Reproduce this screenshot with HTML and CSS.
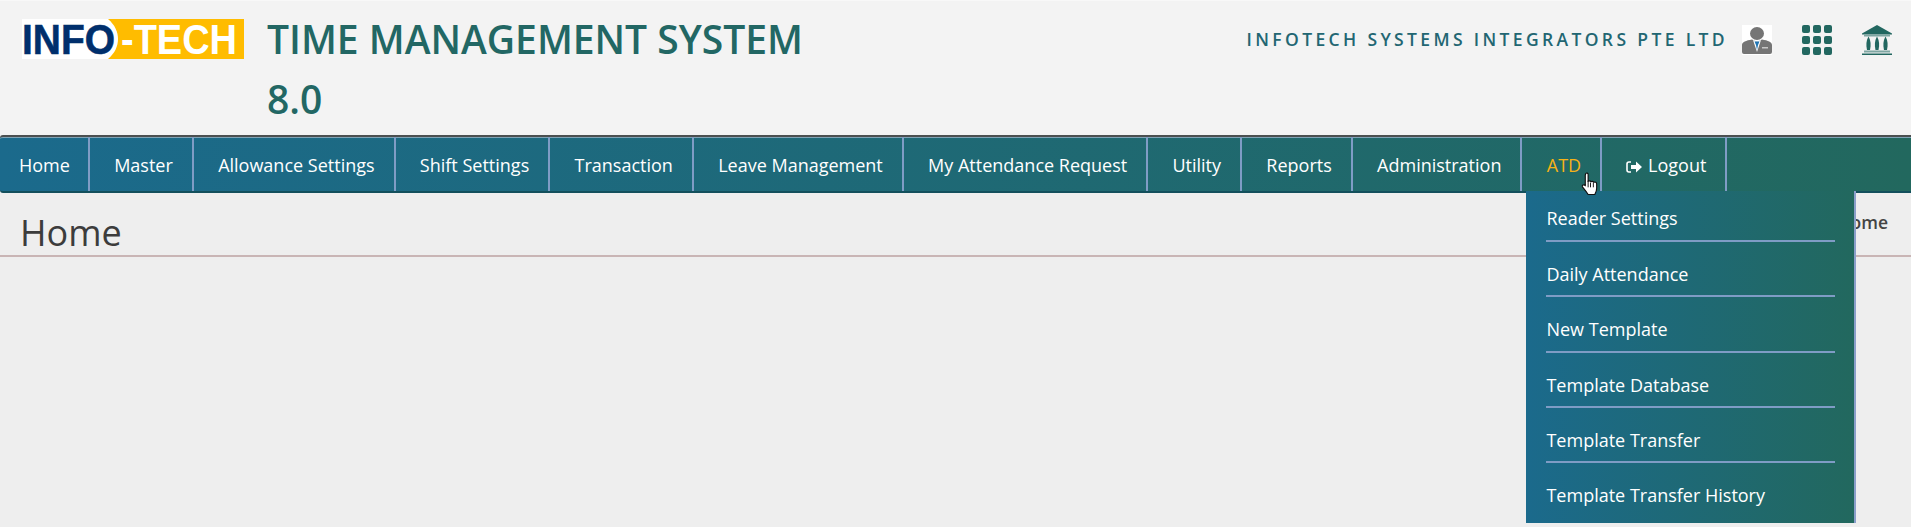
FILE: index.html
```html
<!DOCTYPE html>
<html lang="en">
<head>
  <meta charset="UTF-8">
  <title>Time Management System</title>
  <link rel="stylesheet" href="styles.css">
</head>
<body>

  <!-- Top Header -->
  <header class="top-header">
    <svg class="logo" width="222" height="40" viewBox="0 0 222 40">
      <rect width="222" height="40" fill="#ffbc00"/>
      <path d="M0 0H86C93 6 96 13 96 20C96 27 93 34 86 40H0Z" fill="#fff"/>
      <text class="logo-text" x="0" y="35" fill="#002f6c" stroke="#002f6c" stroke-width=".6" textLength="93" lengthAdjust="spacingAndGlyphs">INFO</text>
      <text class="logo-text" x="99" y="35" fill="#fff" textLength="116" lengthAdjust="spacingAndGlyphs">-TECH</text>
    </svg>
    <h1 class="app-title">TIME MANAGEMENT SYSTEM 8.0</h1>
    <div class="company">
      <span class="company-name">INFOTECH SYSTEMS INTEGRATORS PTE LTD</span>
      <svg class="head-icon" viewBox="0 0 30 30">
        <rect width="30" height="30" fill="#fff"/>
        <ellipse cx="15" cy="8.500" rx="7" ry="6.500" fill="#757575"/>
        <path d="M0 27V20C0 17 4 15.500 10 14.500L15 17L20 14.500C26 15.500 30 17 30 20V27Q30 29 28 29H2Q0 29 0 27Z" fill="#757575"/>
        <path d="M11 15L15 27L19 15L15 17Z" fill="#fff"/>
        <path d="M12.500 16.500L17.500 16.500L16 20L15 25L14 20Z" fill="#2176b5"/>
        <rect x="20" y="22" width="6" height="1.500" fill="#c8c8c8"/>
      </svg>
      <div class="apps-icon">
        <i></i><i></i><i></i><i></i><i></i><i></i><i></i><i></i><i></i>
      </div>
      <svg class="head-icon" viewBox="0 0 30 30">
        <path d="M15 0L30 8.500V9.500H0V8.500Z" fill="#226760"/>
        <rect x="2" y="9.500" width="26" height="2" fill="#7ea6a2"/>
        <path d="M6.500 11.500C4 16 4 20 5 25H8C9 20 9 16 6.500 11.500Z" fill="#226760"/>
        <path d="M15 11.500C12.500 16 12.500 20 13.500 25H16.500C17.500 20 17.500 16 15 11.500Z" fill="#226760"/>
        <path d="M23.500 11.500C21 16 21 20 22 25H25C26 20 26 16 23.500 11.500Z" fill="#226760"/>
        <rect x="2" y="25.500" width="26" height="2" fill="#7ea6a2"/>
        <rect x="0" y="28.500" width="30" height="1.500" fill="#226760"/>
      </svg>
    </div>
  </header>

  <!-- Main Menu -->
  <nav class="main-nav">
    <ul class="nav-list">
      <li>Home</li>
      <li>Master</li>
      <li>Allowance Settings</li>
      <li>Shift Settings</li>
      <li>Transaction</li>
      <li>Leave Management</li>
      <li>My Attendance Request</li>
      <li>Utility</li>
      <li>Reports</li>
      <li>Administration</li>
      <li class="active">ATD
        <ul class="dropdown">
          <li>Reader Settings</li>
          <li>Daily Attendance</li>
          <li>New Template</li>
          <li>Template Database</li>
          <li>Template Transfer</li>
          <li>Template Transfer History</li>
        </ul>
        <svg class="hand-cursor" width="19" height="24" viewBox="0 0 20 25">
          <path d="M5 1.500C6 .5 7.500 1 7.500 2.500V9.500C9 9 10 9 10.500 10C12 9.500 13 9.700 13.500 10.700C15 10.200 16.500 10.700 16.500 12.500V17C16.500 20 15.500 21.500 14.500 23.500H7.500C6 21 3.500 18 1.500 15.500C.8 14 2.500 12.500 4.500 14V3Z" fill="#fff" stroke="#111" stroke-width="1.200"/>
          <path d="M10 11V16M13 11V16M7.500 9V16" stroke="#111" stroke-width="1" fill="none"/>
        </svg>
      </li>
      <li>
        <svg class="logout-icon" width="16" height="12" viewBox="0 0 16 12">
          <path d="M5 1H3Q1 1 1 3V9Q1 11 3 11H5" stroke="#fff" stroke-width="1.600" fill="none"/>
          <path d="M5 4H10V.5L16 6L10 11.500V8H5Z" fill="#fff"/>
        </svg>
        Logout
      </li>
    </ul>
  </nav>

  <!-- Page Heading -->
  <div class="page-head">
    <h2>Home</h2>
    <span class="crumb">Home</span>
  </div>

</body>
</html>
```

FILE: styles.css
```css
body {
  margin: 0;
  height: 527px;
  overflow: hidden;
  background-color: #eeeeee;
  font-family: 'Open Sans', sans-serif;
}

.top-header {
  height: 135px;
  box-sizing: border-box;
  display: flex;
  align-items: flex-start;
  padding: 19px 19px 0 22px;
  background-color: #f3f3f3;
  border-top: 1px solid #f8f8f8;
}

.logo {
  flex: none;
  margin-top: -1px;
  overflow: visible;
}

.logo-text {
  font-family: 'Liberation Sans', sans-serif;
  font-weight: 700;
  font-size: 43px;
}

.app-title {
  width: 590px;
  margin: -11px 0 0 23px;
  font-size: 39px;
  font-weight: 600;
  line-height: 60px;
  color: #226764;
}

.company {
  margin-left: auto;
  display: flex;
  align-items: flex-start;
  margin-top: 5px;
}

.company-name {
  margin: 2px 0 0 0;
  font-size: 17.500px;
  font-weight: 600;
  letter-spacing: 3.36px;
  color: #226672;
  line-height: 24px;
}

.head-icon {
  width: 30px;
  height: 30px;
  margin-left: 14px;
  flex: none;
}

.head-icon:last-child {
  margin-left: 30px;
}

.apps-icon {
  width: 30px;
  height: 30px;
  margin-left: 30px;
  display: grid;
  grid-template-columns: repeat(3, 8px);
  gap: 3px;
}

.apps-icon i {
  height: 8px;
  background: #226760;
  border-radius: 2px;
}

.main-nav {
  height: 58px;
  box-sizing: border-box;
  background: linear-gradient(to right, #1b6a8c, #22685e);
  border-top: 2px solid #4b4f50;
  border-bottom: 2px solid #134f5c;
  border-radius: 3px 0 0 3px;
  box-shadow: inset 0 1px 0 #7fa3b5;
}

.nav-list {
  list-style: none;
  margin: 0;
  padding: 0;
  display: flex;
  height: 54px;
}

.nav-list > li {
  position: relative;
  box-sizing: border-box;
  padding: 3px 19px 0 24.300px;
  border-right: 2px solid #7f9cc5;
  color: #fff;
  font-size: 18px;
  line-height: 50px;
  white-space: nowrap;
}

.nav-list > li:first-child {
  padding-left: 19px;
  padding-right: 18px;
}

.nav-list > li.active {
  color: #f7b218;
}

.logout-icon {
  vertical-align: -1px;
  margin-right: 1px;
}

.dropdown {
  position: absolute;
  z-index: 5;
  top: 54px;
  left: 4px;
  width: 330px;
  margin: 0;
  padding: 0 19px 0 20px;
  box-sizing: border-box;
  list-style: none;
  background: linear-gradient(to right, #1b6a8c, #22685e);
  border-right: 2px solid #8a9fc9;
}

.dropdown li {
  height: 55.300px;
  box-sizing: border-box;
  padding-top: 18px;
  line-height: 28px;
  color: #fff;
  border-bottom: 2px solid #7f9cc5;
}

.dropdown li:first-child {
  height: 51px;
  padding-top: 13px;
}

.dropdown li:last-child {
  height: 60px;
  border-bottom: none;
}

.hand-cursor {
  position: absolute;
  z-index: 6;
  top: 35px;
  left: 59px;
}

.page-head {
  height: 64px;
  box-sizing: border-box;
  display: flex;
  justify-content: space-between;
  align-items: flex-start;
  padding: 0 23px 0 20px;
  border-bottom: 2px solid #c9b5b5;
}

.page-head h2 {
  margin: 15px 0 0;
  font-size: 36px;
  font-weight: 400;
  line-height: 50px;
  color: #3c3c3c;
}

.crumb {
  margin-top: 17px;
  font-size: 17.500px;
  font-weight: 600;
  line-height: 24px;
  color: #444;
}
```
